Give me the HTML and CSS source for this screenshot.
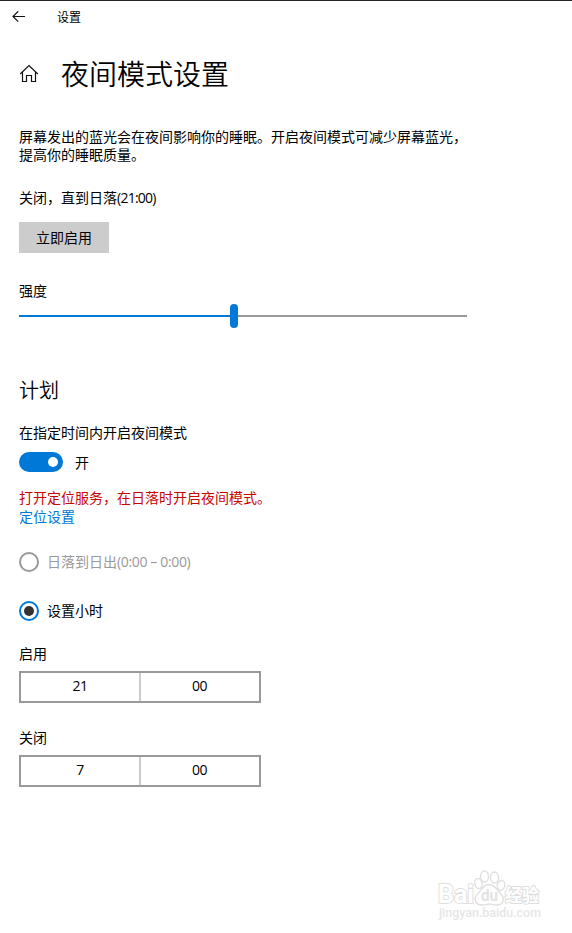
FILE: index.html
```html
<!DOCTYPE html>
<html lang="zh-CN">
<head>
<meta charset="utf-8">
<title>设置</title>
<link rel="stylesheet" href="styles.css">
</head>
<body>
<header class="titlebar">
  <svg class="back" width="14" height="12" viewBox="0 0 14 12"><path d="M13 5.500H1M6.200 .3L1 5.500l5.200 5.200"/></svg>
  <span class="app-name">设置</span>
</header>
<main class="page">
  <div class="heading">
    <svg class="home" width="20" height="20" viewBox="0 0 20 20"><path d="M1.200 11L10 2.500 18.800 11M3.500 9V18.500H7.500V12.500H12.500V18.500H16.500V9"/></svg>
    <h1>夜间模式设置</h1>
  </div>
  <p class="intro">屏幕发出的蓝光会在夜间影响你的睡眠。开启夜间模式可减少屏幕蓝光，<br>提高你的睡眠质量。</p>
  <p class="status">关闭，直到日落<span class="latin">(21:00)</span></p>
  <button class="enable">立即启用</button>
  <p class="strength">强度</p>
  <div class="slider"><div class="fill"></div><div class="thumb"></div><div class="rest"></div></div>
  <h2>计划</h2>
  <p class="schedule">在指定时间内开启夜间模式</p>
  <div class="toggle-row"><span class="toggle"><span class="knob"></span></span><span>开</span></div>
  <p class="warning">打开定位服务，在日落时开启夜间模式。</p>
  <a class="link">定位设置</a>
  <div class="radio-row disabled"><span class="radio"></span><span class="radio-text">日落到日出<span class="latin">(0:00 – 0:00)</span></span></div>
  <div class="radio-row selected"><span class="radio"></span><span class="radio-text">设置小时</span></div>
  <p class="time-label">启用</p>
  <div class="time"><span>21</span><span>00</span></div>
  <p class="time-label">关闭</p>
  <div class="time"><span>7</span><span>00</span></div>
</main>
<svg class="watermark" width="112" height="56" viewBox="0 0 112 56">
  <g class="mark">
    <text class="brand" x="3" y="38" textLength="36" lengthAdjust="spacingAndGlyphs">Bai</text>
    <ellipse cx="43.500" cy="18.500" rx="3.700" ry="5" transform="rotate(-15 43.500 18.500)"/>
    <ellipse cx="49.500" cy="11.500" rx="4" ry="5.500"/>
    <ellipse cx="59.500" cy="12.500" rx="4" ry="5.500"/>
    <ellipse cx="66" cy="20.500" rx="3.700" ry="5" transform="rotate(15 66 20.500)"/>
    <path d="M54 19.500C48 19.500 47 25 43 28.500C38 33 40 40 47 40C51 40 52 39 54 39S58 40 62 40C69 40 70 33 65.500 28.500C62 25 60 19.500 54 19.500Z"/>
    <text class="du" x="46" y="36" textLength="17" lengthAdjust="spacingAndGlyphs">du</text>
    <text class="cn" x="70" y="37" textLength="34" lengthAdjust="spacingAndGlyphs">经验</text>
  </g>
  <text class="site" x="4" y="52" textLength="102" lengthAdjust="spacingAndGlyphs">jingyan.baidu.com</text>
</svg>
</body>
</html>
```
FILE: styles.css
```css
* { box-sizing: border-box; }
body {
  margin: 0;
  height: 933px;
  overflow: hidden;
  position: relative;
  background: #fff;
  border-top: 1px solid #252525;
  color: #000;
  font: 14px/20px "Noto Sans CJK SC", sans-serif;
}
p, h1, h2 { margin: 0; font-weight: 400; }
.titlebar { display: flex; align-items: center; height: 32px; padding-left: 12px; gap: 31px; }
.app-name { font-size: 12px; }
.back, .home { fill: none; stroke: #111; stroke-width: 1.200; }
.page { padding-left: 19px; }
.heading { display: flex; align-items: center; gap: 22px; height: 40px; margin-top: 20px; }
.home { margin-top: -1px; }
h1 { font-size: 28px; line-height: 40px; font-weight: 350; }
.intro { line-height: 18px; margin-top: 34px; }
.status { margin-top: 24px; }
.latin { font-family: "Open Sans", sans-serif; font-size: 14px; letter-spacing: -.75px; line-height: 1; }
.disabled .latin { letter-spacing: -.35px; }
.enable {
  display: block; width: 90px; height: 31px; margin-top: 15px; padding: 0 0 2px;
  border: 0; background: #ccc; color: #000; font: inherit;
}
.strength { margin-top: 27px; }
.slider { display: flex; align-items: center; width: 448px; height: 24px; margin-top: 4px; }
.fill { width: 211px; height: 2px; background: #0078d7; }
.thumb { width: 8px; height: 24px; border-radius: 4px; background: #0078d7; }
.rest { flex: 1; height: 2px; background: #999; }
h2 { font-size: 20px; line-height: 28px; margin-top: 48px; font-weight: 350; }
.schedule { margin-top: 18px; }
.toggle-row { display: flex; align-items: center; gap: 12px; height: 20px; margin-top: 10px; }
.toggle { display: flex; align-items: center; justify-content: flex-end; width: 44px; height: 20px; padding-right: 5px; border-radius: 10px; background: #0078d7; }
.knob { width: 10px; height: 10px; border-radius: 50%; background: #fff; }
.warning { margin-top: 15px; color: #c50500; }
.link { display: block; line-height: 18px; color: #0078d7; }
.radio-row { display: flex; align-items: center; gap: 8px; height: 20px; }
.radio-text { padding-bottom: 2px; }
.disabled { margin-top: 27px; color: #999; }
.selected { margin-top: 29px; }
.radio { display: grid; place-items: center; width: 20px; height: 20px; border: 2px solid #999; border-radius: 50%; }
.selected .radio { border-color: #0078d7; }
.selected .radio::after { content: ""; width: 10px; height: 10px; border-radius: 50%; background: #333; }
.time-label { margin-top: 22px; }
.time { display: grid; grid-template-columns: 1fr 1fr; width: 242px; height: 32px; margin-top: 8px; border: 2px solid #999; font: 14px/25px "Open Sans", sans-serif; letter-spacing: -.5px; text-align: center; }
.time + .time-label { margin-top: 24px; }
.time span:first-child { border-right: 2px solid #ccc; margin-right: -1px; }
.watermark { position: absolute; left: 435px; top: 864px; }
.mark { fill: #fff; stroke: #dfdfdf; stroke-width: 1.400; }
.mark text { paint-order: stroke; stroke-width: 2; }
.brand { font: 700 25px Roboto, sans-serif; }
.mark .du { font: 700 17px Roboto, sans-serif; fill: #e2e2e2; stroke: none; }
.cn { font: 700 18px "Noto Sans CJK SC", sans-serif; }
.site { font: 500 12px Roboto, sans-serif; fill: #e6e6e6; }
```
